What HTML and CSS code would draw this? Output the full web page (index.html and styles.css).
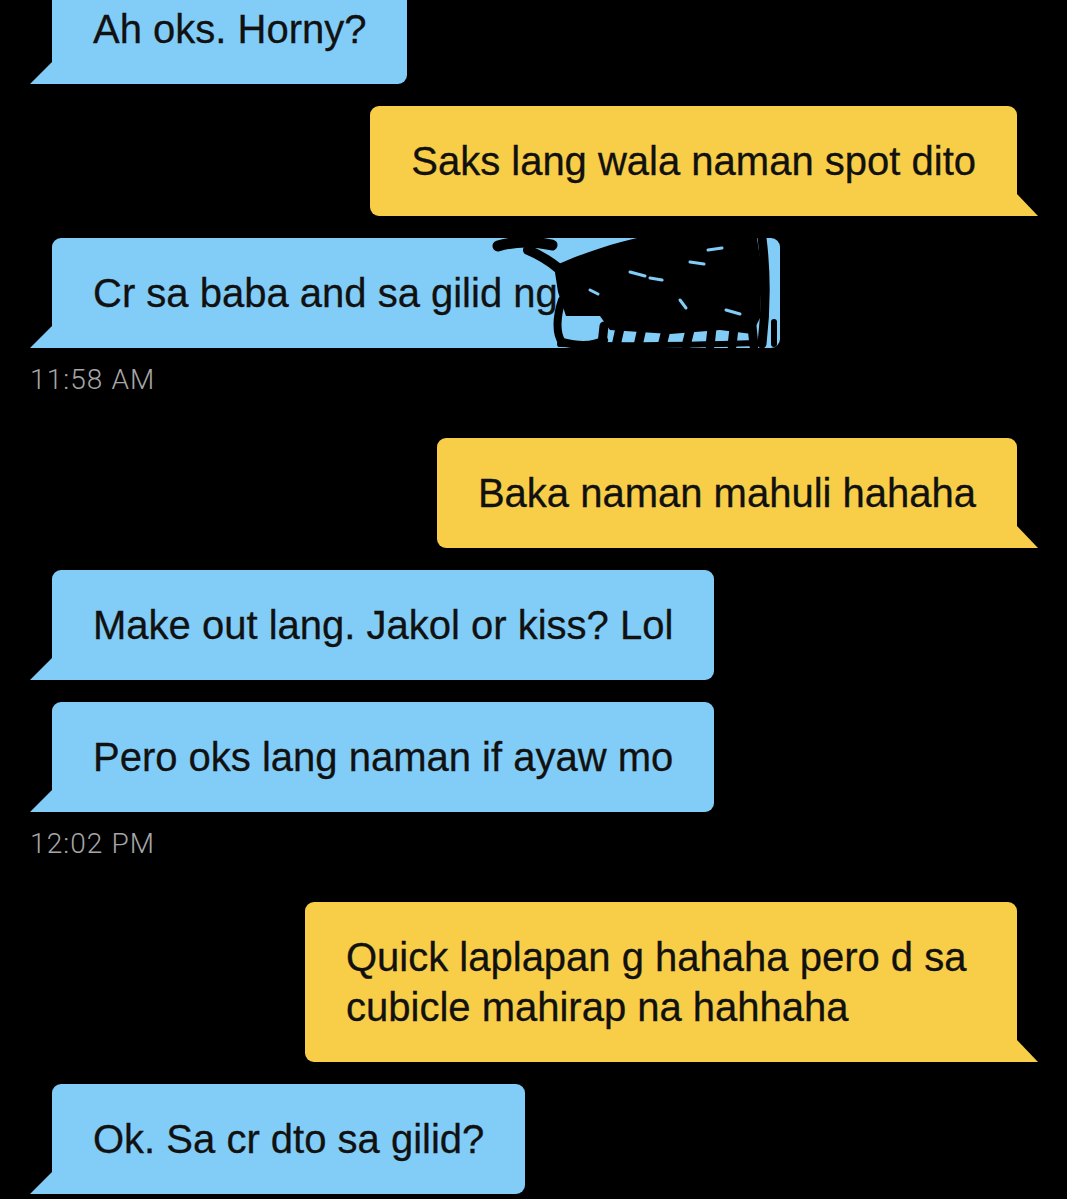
FILE: index.html
```html
<!DOCTYPE html>
<html lang="en">
<head>
    <meta charset="UTF-8">
    <meta name="viewport" content="width=device-width, initial-scale=1.0">
    <title>Chat</title>
    <link rel="stylesheet" href="styles.css">
</head>
<body>
    <div class="thread">
        <div class="msg in"><div class="bubble">Ah oks. Horny?</div></div>
        <div class="msg out"><div class="bubble">Saks lang wala naman spot dito</div></div>
        <div class="msg in">
            <div class="bubble scribbled">Cr sa baba and sa gilid ng<span class="redacted"></span>
                <!-- redaction scribble -->
                <svg class="scribble" viewBox="0 0 300 130" width="300" height="130">
                    <path d="M64 36 C90 24 140 6 180 3 L266 2 L272 40 L270 88 L262 104 L230 100 L180 104 L120 100 L110 86 L76 86 L68 62 Z" fill="#000"/>
                    <g fill="none" stroke="#000" stroke-linecap="round" stroke-linejoin="round">
                        <path d="M8 16 C25 11 45 11 62 15" stroke-width="11"/>
                        <path d="M38 20 C50 25 58 30 68 38" stroke-width="10"/>
                        <path d="M72 70 C66 88 66 104 72 112 C88 116 104 116 114 110" stroke-width="8"/>
                        <path d="M70 114 C120 116 200 115 268 113" stroke-width="6"/>
                        <path d="M114 96 L112 114 M130 98 L126 116 M152 98 L148 116 M176 100 L172 116 M200 100 L196 116 M222 98 L220 116 M244 98 L242 116 M262 96 L264 116" stroke-width="9"/>
                        <path d="M272 8 C276 40 276 80 272 114" stroke-width="9"/>
                        <path d="M284 92 L284 114" stroke-width="6"/>
                        <path d="M258 10 C262 30 258 60 262 90" stroke-width="8"/>
                    </g>
                    <g fill="none" stroke="#82cdf7" stroke-width="3" stroke-linecap="round">
                        <path d="M140 42 L155 46"/>
                        <path d="M160 48 L172 50"/>
                        <path d="M218 20 L232 18"/>
                        <path d="M200 32 L214 34"/>
                        <path d="M236 80 L250 84"/>
                        <path d="M100 60 L108 64"/>
                        <path d="M190 70 L196 78"/>
                    </g>
                </svg>
            </div>
        </div>
        <div class="stamp">11:58 AM</div>
        <div class="msg out"><div class="bubble">Baka naman mahuli hahaha</div></div>
        <div class="msg in"><div class="bubble">Make out lang. Jakol or kiss? Lol</div></div>
        <div class="msg in"><div class="bubble">Pero oks lang naman if ayaw mo</div></div>
        <div class="stamp">12:02 PM</div>
        <div class="msg out"><div class="bubble">Quick laplapan g hahaha pero d sa cubicle mahirap na hahhaha</div></div>
        <div class="msg in"><div class="bubble">Ok. Sa cr dto sa gilid?</div></div>
    </div>
</body>
</html>
```

FILE: styles.css
```css
body {
    background-color: #000000;
    margin: 0;
    font-family: "Liberation Sans", Arial, sans-serif;
    overflow: hidden;
}
.thread {
    display: flex;
    flex-direction: column;
    gap: 22px;
    padding: 0 50px 0 52px;
    margin-top: -26px;
}
.msg {
    display: flex;
}
.msg.in {
    justify-content: flex-start;
}
.msg.out {
    justify-content: flex-end;
}
.bubble {
    position: relative;
    box-sizing: border-box;
    max-width: 712px;
    padding: 30px 41px;
    font-size: 40px;
    line-height: 50px;
    color: #111111;
    -webkit-text-stroke: 0.3px #111111;
    border-radius: 9px;
}
.bubble.scribbled {
    max-width: none;
    white-space: nowrap;
}
.in .bubble {
    background: #82cdf7;
    border-bottom-left-radius: 0;
}
.out .bubble {
    background: #f8cd47;
    border-bottom-right-radius: 0;
}
.bubble::after {
    content: "";
    position: absolute;
    bottom: 0;
    width: 22px;
    height: 22px;
    background: inherit;
}
.in .bubble::after {
    left: -22px;
    clip-path: polygon(100% 0, 100% 100%, 0 100%);
}
.out .bubble::after {
    right: -21px;
    width: 21px;
    clip-path: polygon(0 0, 100% 100%, 0 100%);
}
.redacted {
    display: inline-block;
    width: 181px;
    height: 0;
}
.scribble {
    position: absolute;
    left: 438px;
    top: -8px;
}
.stamp {
    margin: -8px 0 18px -22px;
    font-family: Roboto, "Liberation Sans", sans-serif;
    font-weight: 300;
    font-size: 28px;
    letter-spacing: 1.1px;
    line-height: 36px;
    color: #a6a6a6;
}
```
